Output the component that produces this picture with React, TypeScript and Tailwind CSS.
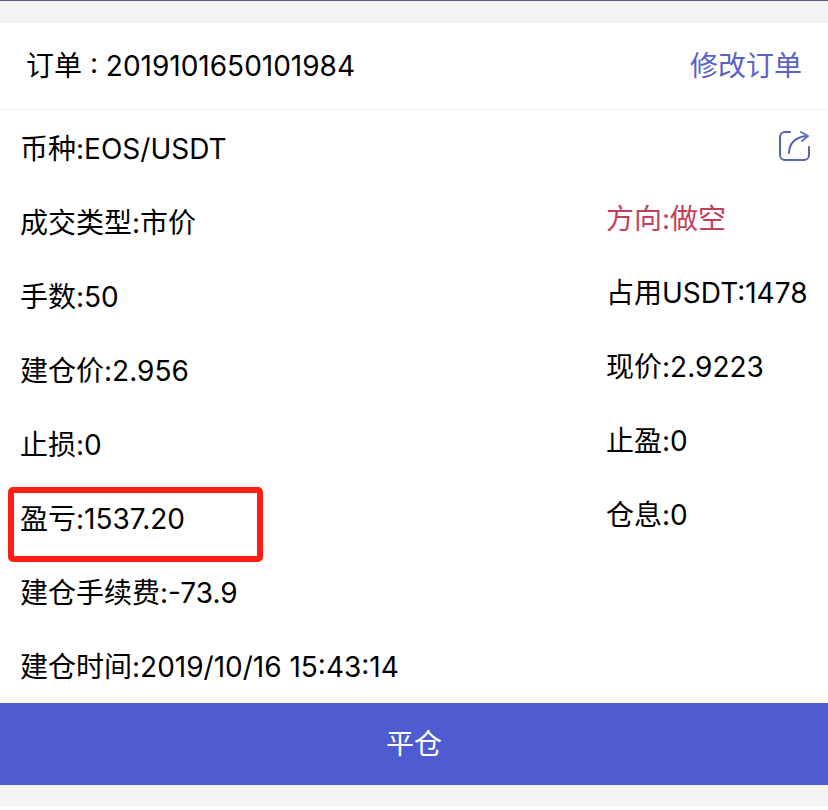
import React from "react"

const leftRows = [
  { label: "币种", value: "EOS/USDT" },
  { label: "成交类型", value: "市价" },
  { label: "手数", value: "50" },
  { label: "建仓价", value: "2.956" },
  { label: "止损", value: "0" },
  { label: "盈亏", value: "1537.20", marked: true },
  { label: "建仓手续费", value: "-73.9" },
  { label: "建仓时间", value: "2019/10/16 15:43:14" },
]

const rightRows = [
  { label: "方向", value: "做空", short: true },
  { label: "占用USDT", value: "1478" },
  { label: "现价", value: "2.9223" },
  { label: "止盈", value: "0" },
  { label: "仓息", value: "0" },
]

function ShareIcon() {
  return (
    <svg viewBox="0 0 32 32" className="h-8 w-8" fill="none" stroke="#5a61b8" strokeWidth="2" strokeLinecap="round" strokeLinejoin="round">
      <path d="M12 2H7a5 5 0 0 0-5 5v18a5 5 0 0 0 5 5h19a5 5 0 0 0 5-5v-8" />
      <path d="M11 23C11.500 13 17 7 29 6" />
      <path d="M23 2l7 4-6 5" stroke="#5a6fd0" />
    </svg>
  )
}

export default function App() {
  return (
    <div className="bg-white font-[Inter,'Noto_Sans_CJK_SC',sans-serif] text-[28px] leading-10 text-black">
      <div className="h-[23px] border-t border-[#5c5785] bg-[#f3f3f5]" />
      <main>
        <header className="flex h-[87px] items-center justify-between border-b border-[#f0f0f2] px-[26px]">
          <h1>订单 : 2019101650101984</h1>
          <button type="button" className="text-[#5a62c8]">修改订单</button>
        </header>

        <section className="flex justify-between pt-[19px] pr-[18px] pb-4 pl-5">
          <dl className="flex flex-col gap-[34px]">
            {leftRows.map((row) => (
              <div key={row.label} className="relative flex">
                {row.marked && (
                  <span className="absolute -top-3 -left-3 h-[75px] w-[255px] rounded-[5px] border-[6px] border-[#ff1e14]" />
                )}
                <dt>{row.label}:</dt>
                <dd>{row.value}</dd>
              </div>
            ))}
          </dl>

          <div className="flex w-[204px] flex-col">
            <button type="button" aria-label="分享" className="mt-px self-end">
              <ShareIcon />
            </button>
            <dl className="mt-[37px] flex flex-col gap-[34px]">
              {rightRows.map((row) => (
                <div key={row.label} className={row.short ? "flex text-[#c23f5a]" : "flex"}>
                  <dt>{row.label}:</dt>
                  <dd>{row.value}</dd>
                </div>
              ))}
            </dl>
          </div>
        </section>

        <button type="button" className="h-[82px] w-full bg-[#4f5bd0] text-white">
          平仓
        </button>
      </main>
      <div className="h-[21px] bg-[#f3f3f5]" />
    </div>
  )
}
